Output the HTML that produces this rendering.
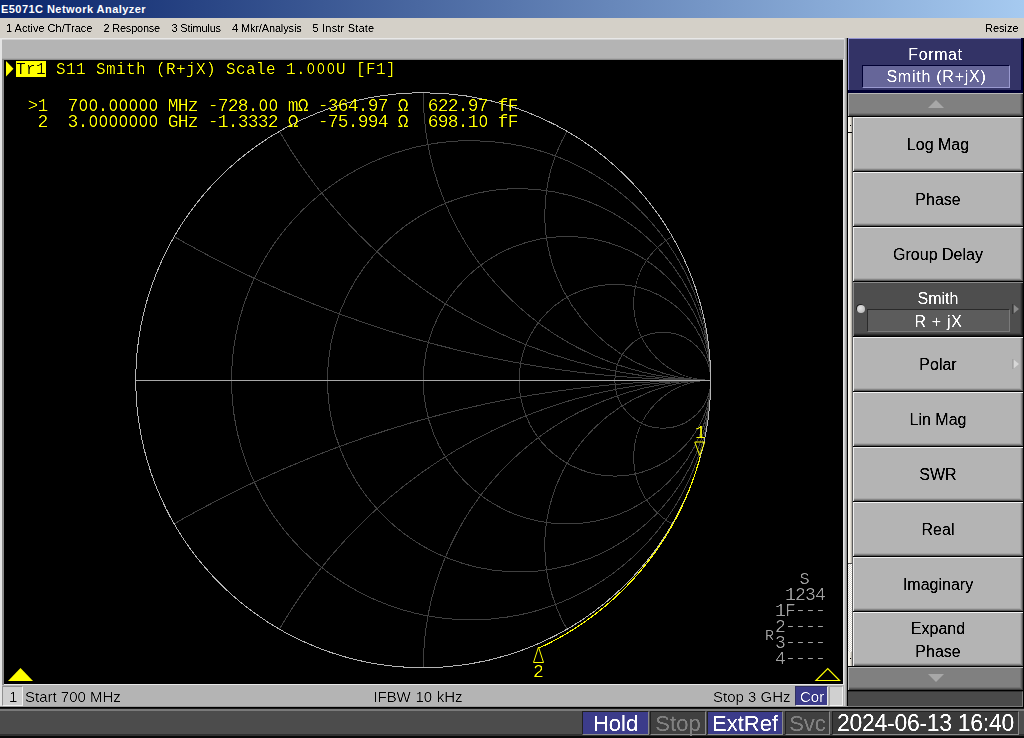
<!DOCTYPE html>
<html><head><meta charset="utf-8">
<style>
*{margin:0;padding:0;box-sizing:border-box}
html,body{width:1024px;height:738px;overflow:hidden;background:#4c4c4c;font-family:"Liberation Sans",sans-serif}
.a{position:absolute}
.mono{font-family:"Liberation Mono",monospace;white-space:pre;filter:url(#th)}
.z{display:inline-block;transform:scaleX(.85)}
.t{white-space:pre;line-height:1}
.sk{position:absolute;left:853px;width:170px;height:54px;background:#b4b4b4;box-shadow:inset 1px 1px 0 #f0f0f0,inset -1px -1px 0 #5a5a5a,inset -2px -2px 0 #868686,inset -3px -3px 0 #a6a6a6;color:#000;font-size:16px;text-align:center}
.sk span{position:absolute;left:0;right:0;top:20px;line-height:16px;white-space:pre;filter:url(#th3);-webkit-text-stroke:0.12px #000}
</style></head><body>
<svg width="0" height="0" style="position:absolute"><filter id="th" x="-2%" y="-10%" width="104%" height="120%"><feComponentTransfer><feFuncA type="linear" slope="1.6" intercept="-0.5"/></feComponentTransfer></filter><filter id="th3" x="-2%" y="-10%" width="104%" height="120%"><feComponentTransfer><feFuncA type="linear" slope="2.2" intercept="-0.55"/></feComponentTransfer></filter></svg>
<div class="a" style="left:0px;top:0px;width:1024px;height:18px;background:linear-gradient(to right,#0a246a,#a6caf0);"></div>
<div class="a t" style="left:1px;top:4px;font-size:11px;color:#fff;font-weight:bold;letter-spacing:0.45px">E5071C Network Analyzer</div>
<div class="a" style="left:0px;top:18px;width:1024px;height:20px;background:#d4d0c8;"></div>
<div class="a t" style="left:6px;top:23px;font-size:11px;color:#000;letter-spacing:0px;filter:url(#th3)">1 Active Ch/Trace</div>
<div class="a t" style="left:103.5px;top:23px;font-size:11px;color:#000;letter-spacing:-0.22px;filter:url(#th3)">2 Response</div>
<div class="a t" style="left:171.5px;top:23px;font-size:11px;color:#000;letter-spacing:-0.2px;filter:url(#th3)">3 Stimulus</div>
<div class="a t" style="left:232px;top:23px;font-size:11px;color:#000;letter-spacing:-0.14px;filter:url(#th3)">4 Mkr/Analysis</div>
<div class="a t" style="left:312.5px;top:23px;font-size:11px;color:#000;letter-spacing:0.2px;filter:url(#th3)">5 Instr State</div>
<div class="a t" style="left:985px;top:23px;font-size:11px;color:#000;letter-spacing:0px;filter:url(#th3)">Resize</div>
<div class="a" style="left:0px;top:38px;width:848px;height:670px;background:#b4b4b4;"></div>
<div class="a" style="left:0px;top:38px;width:847px;height:1px;background:#e8e8e8;"></div>
<div class="a" style="left:0px;top:39px;width:847px;height:1px;background:#d0d0d0;"></div>
<div class="a" style="left:0px;top:38px;width:2px;height:669px;background:#e4e4e4;"></div>
<div class="a" style="left:2px;top:58px;width:842px;height:1px;background:#a8a8a8;"></div>
<div class="a" style="left:2px;top:59px;width:842px;height:1px;background:#8c8c8c;"></div>
<div class="a" style="left:2px;top:59px;width:2px;height:626px;background:#8a8a8a;"></div>
<div class="a" style="left:4px;top:60px;width:839px;height:624px;background:#000;"></div>
<div class="a" style="left:843px;top:59px;width:1px;height:626px;background:#e8e8e8;"></div>
<div class="a" style="left:4px;top:684px;width:840px;height:1px;background:#e8e8e8;"></div>
<div class="a" style="left:844px;top:38px;width:1px;height:669px;background:#d0d0d0;"></div>
<div class="a" style="left:845px;top:38px;width:1px;height:669px;background:#b0b0b0;"></div>
<div class="a" style="left:846px;top:38px;width:1px;height:669px;background:#8c8c8c;"></div>
<div class="a" style="left:847px;top:38px;width:1px;height:670px;background:#000;"></div>
<div class="a" style="left:0px;top:706px;width:848px;height:1px;background:#9a9a9a;"></div>
<div class="a" style="left:0px;top:707px;width:1024px;height:1px;background:#000;"></div>
<div class="a" style="left:0px;top:708px;width:1024px;height:1px;background:#181818;"></div>
<div class="a" style="left:0px;top:709px;width:1024px;height:2px;background:#7a7a7a;"></div>
<svg width="1024" height="738" style="position:absolute;left:0;top:0">
<defs><clipPath id="uc"><circle cx="423.25" cy="380.25" r="287.5"/></clipPath></defs>
<g clip-path="url(#uc)" fill="none" stroke="#404040" stroke-width="1" shape-rendering="crispEdges">
<circle cx="471.17" cy="380.25" r="239.58"/>
<circle cx="519.08" cy="380.25" r="191.67"/>
<circle cx="567.00" cy="380.25" r="143.75"/>
<circle cx="614.92" cy="380.25" r="95.83"/>
<circle cx="662.83" cy="380.25" r="47.92"/>
<circle cx="710.75" cy="-692.71" r="1072.96"/>
<circle cx="710.75" cy="1453.21" r="1072.96"/>
<circle cx="710.75" cy="-117.71" r="497.96"/>
<circle cx="710.75" cy="878.21" r="497.96"/>
<circle cx="710.75" cy="92.75" r="287.50"/>
<circle cx="710.75" cy="667.75" r="287.50"/>
<circle cx="710.75" cy="214.26" r="165.99"/>
<circle cx="710.75" cy="546.24" r="165.99"/>
<circle cx="710.75" cy="303.21" r="77.04"/>
<circle cx="710.75" cy="457.29" r="77.04"/>
</g>
<line x1="135" y1="380.5" x2="711" y2="380.5" stroke="#a8a8a8" stroke-width="1"/>
<circle cx="423.25" cy="380.25" r="287.5" fill="none" stroke="#b4b4b4" stroke-width="1" shape-rendering="crispEdges"/>
<polyline points="700.38,455.67 699.97,457.23 699.56,458.79 699.13,460.34 698.69,461.90 698.25,463.45 697.80,465.00 697.34,466.54 696.87,468.08 696.39,469.62 695.90,471.16 695.40,472.70 694.90,474.23 694.38,475.76 693.86,477.29 693.33,478.81 692.79,480.33 692.24,481.85 691.69,483.37 691.12,484.88 690.55,486.39 689.97,487.89 689.38,489.40 688.78,490.90 688.17,492.39 687.55,493.88 686.93,495.37 686.30,496.86 685.66,498.34 685.01,499.82 684.35,501.30 683.68,502.77 683.01,504.24 682.32,505.70 681.63,507.16 680.93,508.62 680.23,510.07 679.51,511.52 678.79,512.97 678.06,514.41 677.32,515.85 676.57,517.28 675.81,518.71 675.05,520.13 674.27,521.55 673.49,522.97 672.71,524.38 671.92,525.79 671.12,527.20 670.31,528.60 669.50,530.00 668.68,531.39 667.85,532.78 667.01,534.17 666.16,535.55 665.31,536.92 664.45,538.29 663.58,539.66 662.70,541.02 661.82,542.38 660.93,543.73 660.03,545.08 659.12,546.42 658.20,547.75 657.28,549.09 656.35,550.41 655.41,551.73 654.47,553.05 653.51,554.36 652.55,555.67 651.59,556.97 650.61,558.26 649.63,559.55 648.64,560.84 647.64,562.11 646.64,563.39 645.63,564.66 644.61,565.92 643.58,567.18 642.55,568.43 641.51,569.67 640.47,570.91 639.42,572.15 638.36,573.38 637.30,574.61 636.23,575.83 635.15,577.04 634.07,578.25 632.97,579.45 631.88,580.65 630.77,581.84 629.66,583.03 628.54,584.20 627.42,585.38 626.28,586.54 625.14,587.70 624.00,588.85 622.85,590.00 621.69,591.14 620.52,592.28 619.35,593.40 618.17,594.52 616.99,595.64 615.80,596.75 614.60,597.85 613.40,598.94 612.19,600.03 610.97,601.11 609.75,602.19 608.52,603.26 607.29,604.32 606.05,605.37 604.80,606.42 603.55,607.46 602.29,608.49 601.03,609.52 599.76,610.54 598.48,611.55 597.20,612.56 595.91,613.56 594.62,614.55 593.32,615.54 592.02,616.51 590.71,617.49 589.40,618.45 588.08,619.41 586.75,620.36 585.42,621.30 584.08,622.24 582.74,623.17 581.40,624.09 580.04,625.00 578.69,625.91 577.32,626.81 575.96,627.70 574.58,628.58 573.21,629.46 571.82,630.33 570.43,631.19 569.04,632.04 567.64,632.89 566.24,633.72 564.83,634.55 563.42,635.38 562.00,636.19 560.58,637.00 559.15,637.79 557.72,638.58 556.29,639.37 554.85,640.14 553.40,640.91 551.95,641.67 550.50,642.42 549.04,643.16 547.58,643.89 546.11,644.62 544.64,645.33 543.16,646.04 541.68,646.75 540.20,647.44 538.71,648.12" fill="none" stroke="#ffff00" stroke-width="1.1" shape-rendering="crispEdges"/>
<path d="M694.75,442.0 L704.75,442.0 L699.75,455.5 Z" fill="none" stroke="#ffff00" stroke-width="1"/>
<path d="M533.5,662.5 L543.5,662.5 L538.5,647.0 Z" fill="none" stroke="#ffff00" stroke-width="1"/>
<path d="M8,681 L33,681 L20.5,668 Z" fill="#ffff00"/>
<path d="M816,680.5 L839.5,680.5 L827.75,668.5 Z" fill="none" stroke="#ffff00" stroke-width="1.2"/>
<path d="M6,61 L13.5,68.75 L6,76.5 Z" fill="#ffff00"/>
</svg><div class="a" style="left:16px;top:61px;width:30px;height:16px;background:#ffff00;"></div>
<div class="a mono" style="left:16px;top:61px;font-size:16px;letter-spacing:0.4px;line-height:18px;color:#000">Tr1</div>
<div class="a mono" style="left:16px;top:61px;font-size:16px;letter-spacing:0.4px;line-height:18px;color:#ffff00">    S11 Smith (R+jX) Scale 1.<span class="z">O</span><span class="z">O</span><span class="z">O</span>U [F1]</div>
<div class="a mono" style="left:27.5px;top:98px;font-size:18px;letter-spacing:-0.8px;line-height:16px;color:#ffff00">&gt;1  7<span class="z">O</span><span class="z">O</span>.<span class="z">O</span><span class="z">O</span><span class="z">O</span><span class="z">O</span><span class="z">O</span> MHz -728.<span class="z">O</span><span class="z">O</span> m&#937; -364.97 &#937;  622.97 fF
 2  3.<span class="z">O</span><span class="z">O</span><span class="z">O</span><span class="z">O</span><span class="z">O</span><span class="z">O</span><span class="z">O</span> GHz -1.3332 &#937;  -75.994 &#937;  698.1<span class="z">O</span> fF</div>
<div class="a mono" style="left:695px;top:424px;font-size:18px;line-height:18px;color:#ffff00">1</div>
<div class="a mono" style="left:533px;top:663px;font-size:18px;line-height:18px;color:#ffff00">2</div>
<div class="a mono" style="left:799.5px;top:572px;font-size:17px;line-height:16px;color:#a0a0a0">S</div>
<div class="a mono" style="left:765px;top:587px;font-size:18px;letter-spacing:-0.8px;line-height:16px;color:#a0a0a0">  1234
 1F---
 2----
 3----
 4----</div>
<div class="a mono" style="left:765px;top:629px;font-size:15px;line-height:15px;color:#a0a0a0">R</div>
<div class="a" style="left:2px;top:686px;width:21px;height:20px;background:#d0d0d0;border-top:1px solid #909090;border-left:1px solid #909090;border-bottom:1px solid #f0f0f0;border-right:1px solid #f0f0f0;"></div>
<div class="a t" style="left:9px;top:689px;font-size:15px;color:#000;filter:url(#th)">1</div>
<div class="a t" style="left:25px;top:689px;font-size:15px;color:#000;filter:url(#th)">Start 700 MHz</div>
<div class="a t" style="left:373.5px;top:689px;font-size:15px;color:#000;word-spacing:0.8px;letter-spacing:-0.1px;filter:url(#th)">IFBW 10 kHz</div>
<div class="a t" style="left:713px;top:689px;font-size:15px;color:#000;filter:url(#th)">Stop 3 GHz</div>
<div class="a" style="left:795px;top:686px;width:33px;height:20px;background:#3c3c8a;border-top:1px solid #303060;border-left:1px solid #303060;border-bottom:1px solid #e8e8e8;border-right:1px solid #e8e8e8;"></div>
<div class="a t" style="left:800px;top:689px;font-size:15px;color:#fff;filter:url(#th)">Cor</div>
<div class="a" style="left:829px;top:686px;width:14px;height:20px;background:#d0d0d0;border-top:1px solid #a0a0a0;border-left:1px solid #a0a0a0;border-bottom:1px solid #f0f0f0;border-right:1px solid #f0f0f0;"></div>
<div class="a" style="left:848px;top:38px;width:176px;height:670px;background:#000;"></div>
<div class="a" style="left:848px;top:38px;width:173px;height:52px;background:#333366;border-top:1px solid #9494d0;border-left:1px solid #9494d0;"></div>
<div class="a" style="left:848px;top:90px;width:175px;height:3px;background:#000033;"></div>
<div class="a" style="left:1021px;top:38px;width:2px;height:54px;background:#000033;"></div>
<div class="a t" style="left:848px;top:47px;font-size:16px;color:#fff;width:175px;text-align:center;letter-spacing:0.6px;filter:url(#th3)">Format</div>
<div class="a" style="left:862px;top:65px;width:148px;height:23px;background:#666699;border-top:1px solid #000033;border-left:1px solid #000033;border-bottom:1px solid #9a9ad0;border-right:1px solid #9a9ad0;"></div>
<div class="a t" style="left:862px;top:69px;font-size:16px;color:#fff;width:149px;text-align:center;letter-spacing:0.75px;filter:url(#th3)">Smith (R+jX)</div>
<div class="a" style="left:848px;top:93px;width:175px;height:23px;background:#808080;box-shadow:inset 1px 1px 0 #b8b8b8,inset -1px -1px 0 #404040,inset -2px -2px 0 #5c5c5c,inset -3px -3px 0 #727272"></div>
<svg class="a" style="left:0;top:0" width="1024" height="738"><path d="M928,108 L944,108 L936,100 Z" fill="#a8a8a8"/></svg>
<div class="a" style="left:848px;top:117px;width:4px;height:549px;background:#000;"></div>
<div class="a" style="left:848px;top:117px;width:4px;height:15px;background:linear-gradient(to right,#fffdf6,#f4f0e6 50%,#a8a49c);"></div>
<div class="a" style="left:850px;top:125px;width:1px;height:1px;background:#000;"></div>
<div class="a" style="left:848px;top:133px;width:4px;height:431px;background:linear-gradient(to right,#fffdf6,#f4f0e6 50%,#a8a49c);"></div>
<div class="a" style="left:848px;top:563px;width:4px;height:1px;background:#505050;"></div>
<div class="a" style="left:848px;top:564px;width:5px;height:88px;background:repeating-conic-gradient(#ffffff 0 25%,#d8d4cc 0 50%) 0 0/2px 2px;"></div>
<div class="a" style="left:848px;top:652px;width:4px;height:14px;background:linear-gradient(to right,#fffdf6,#f4f0e6 50%,#a8a49c);"></div>
<div class="a" style="left:850px;top:658px;width:1px;height:1px;background:#000;"></div>
<div class="a" style="left:852px;top:117px;width:1px;height:549px;background:#5a5a5a;"></div>
<div class="sk" style="top:117px"><span>Log Mag</span></div>
<div class="sk" style="top:172px"><span>Phase</span></div>
<div class="sk" style="top:227px"><span>Group Delay</span></div>
<div class="sk" style="top:337px"><span>Polar</span></div>
<div class="sk" style="top:392px"><span>Lin Mag</span></div>
<div class="sk" style="top:447px"><span>SWR</span></div>
<div class="sk" style="top:502px"><span>Real</span></div>
<div class="sk" style="top:557px"><span>Imaginary</span></div>
<div class="a" style="left:853px;top:282px;width:170px;height:54px;background:#4e4e4e;box-shadow:inset 1px 1px 0 #8a8a8a,inset -1px -1px 0 #1a1a1a,inset -2px -2px 0 #303030,inset -3px -3px 0 #444"></div>
<div class="a t" style="left:853px;width:170px;text-align:center;top:291px;font-size:16px;color:#fff;filter:url(#th3)">Smith</div>
<div class="a" style="left:867px;top:309px;width:143px;height:23px;background:#5c5c5c;border-top:1px solid #2a2a2a;border-left:1px solid #2a2a2a;border-bottom:1px solid #7a7a7a;border-right:1px solid #7a7a7a"></div>
<div class="a t" style="left:867px;width:143px;text-align:center;top:314px;font-size:16px;color:#fff;letter-spacing:0.7px;filter:url(#th3)">R + jX</div>
<div class="a" style="left:857px;top:305px;width:8px;height:8px;border-radius:50%;background:radial-gradient(circle at 40% 40%,#e4e4e4,#b0b0b0);box-shadow:-0.7px -0.7px 0 #101010"></div>
<svg class="a" style="left:0;top:0" width="1024" height="738"><path d="M1013,304 L1019,309 L1013,314 Z" fill="#8a8a8a"/><rect x="1012.5" y="304" width="1" height="10" fill="#222"/><path d="M1013,359 L1019,364 L1013,369 Z" fill="#d8d8d8"/><rect x="1012.5" y="359" width="1" height="10" fill="#909090"/></svg>
<div class="sk" style="top:612px"><span style="top:5px;line-height:23px">Expand
Phase</span></div>
<div class="a" style="left:848px;top:667px;width:175px;height:23px;background:#808080;box-shadow:inset 1px 1px 0 #b8b8b8,inset -1px -1px 0 #404040,inset -2px -2px 0 #5c5c5c,inset -3px -3px 0 #727272"></div>
<svg class="a" style="left:0;top:0" width="1024" height="738"><path d="M928,674 L944,674 L936,682 Z" fill="#a8a8a8"/></svg>
<div class="a" style="left:848px;top:691px;width:175px;height:16px;background:#4a4a4a;border-top:1px solid #303030;border-bottom:1px solid #7a7a7a;border-right:1px solid #7a7a7a"></div>
<div class="a" style="left:0px;top:734px;width:1024px;height:2px;background:#303030;"></div>
<div class="a" style="left:0px;top:736px;width:1024px;height:2px;background:#080808;"></div>
<div class="a" style="left:582px;top:711px;width:67px;height:24px;background:#3c3c8a;border-top:1px solid #202020;border-left:1px solid #202020;border-bottom:1px solid #8a8a8a;border-right:1px solid #8a8a8a"></div>
<div class="a t" style="left:582px;top:713px;font-size:22px;color:#fff;width:67px;text-align:center;;filter:url(#th3)">Hold</div>
<div class="a" style="left:650px;top:711px;width:56px;height:24px;background:#404040;border-top:1px solid #202020;border-left:1px solid #202020;border-bottom:1px solid #8a8a8a;border-right:1px solid #8a8a8a"></div>
<div class="a t" style="left:650px;top:713px;font-size:22px;color:#808080;width:56px;text-align:center;;filter:url(#th3)">Stop</div>
<div class="a" style="left:707px;top:711px;width:76px;height:24px;background:#3c3c8a;border-top:1px solid #202020;border-left:1px solid #202020;border-bottom:1px solid #8a8a8a;border-right:1px solid #8a8a8a"></div>
<div class="a t" style="left:707px;top:713px;font-size:22px;color:#fff;width:76px;text-align:center;;filter:url(#th3)">ExtRef</div>
<div class="a" style="left:785px;top:711px;width:45px;height:24px;background:#404040;border-top:1px solid #202020;border-left:1px solid #202020;border-bottom:1px solid #8a8a8a;border-right:1px solid #8a8a8a"></div>
<div class="a t" style="left:785px;top:713px;font-size:22px;color:#808080;width:45px;text-align:center;;filter:url(#th3)">Svc</div>
<div class="a" style="left:832px;top:711px;width:187px;height:24px;background:#3a3a3a;border-top:1px solid #202020;border-left:1px solid #202020;border-bottom:1px solid #8a8a8a;border-right:1px solid #8a8a8a"></div>
<div class="a t" style="left:832px;top:712px;font-size:23px;color:#fff;width:187px;text-align:center;letter-spacing:-0.3px;filter:url(#th3)">2024-06-13 16:40</div>
</body></html>
